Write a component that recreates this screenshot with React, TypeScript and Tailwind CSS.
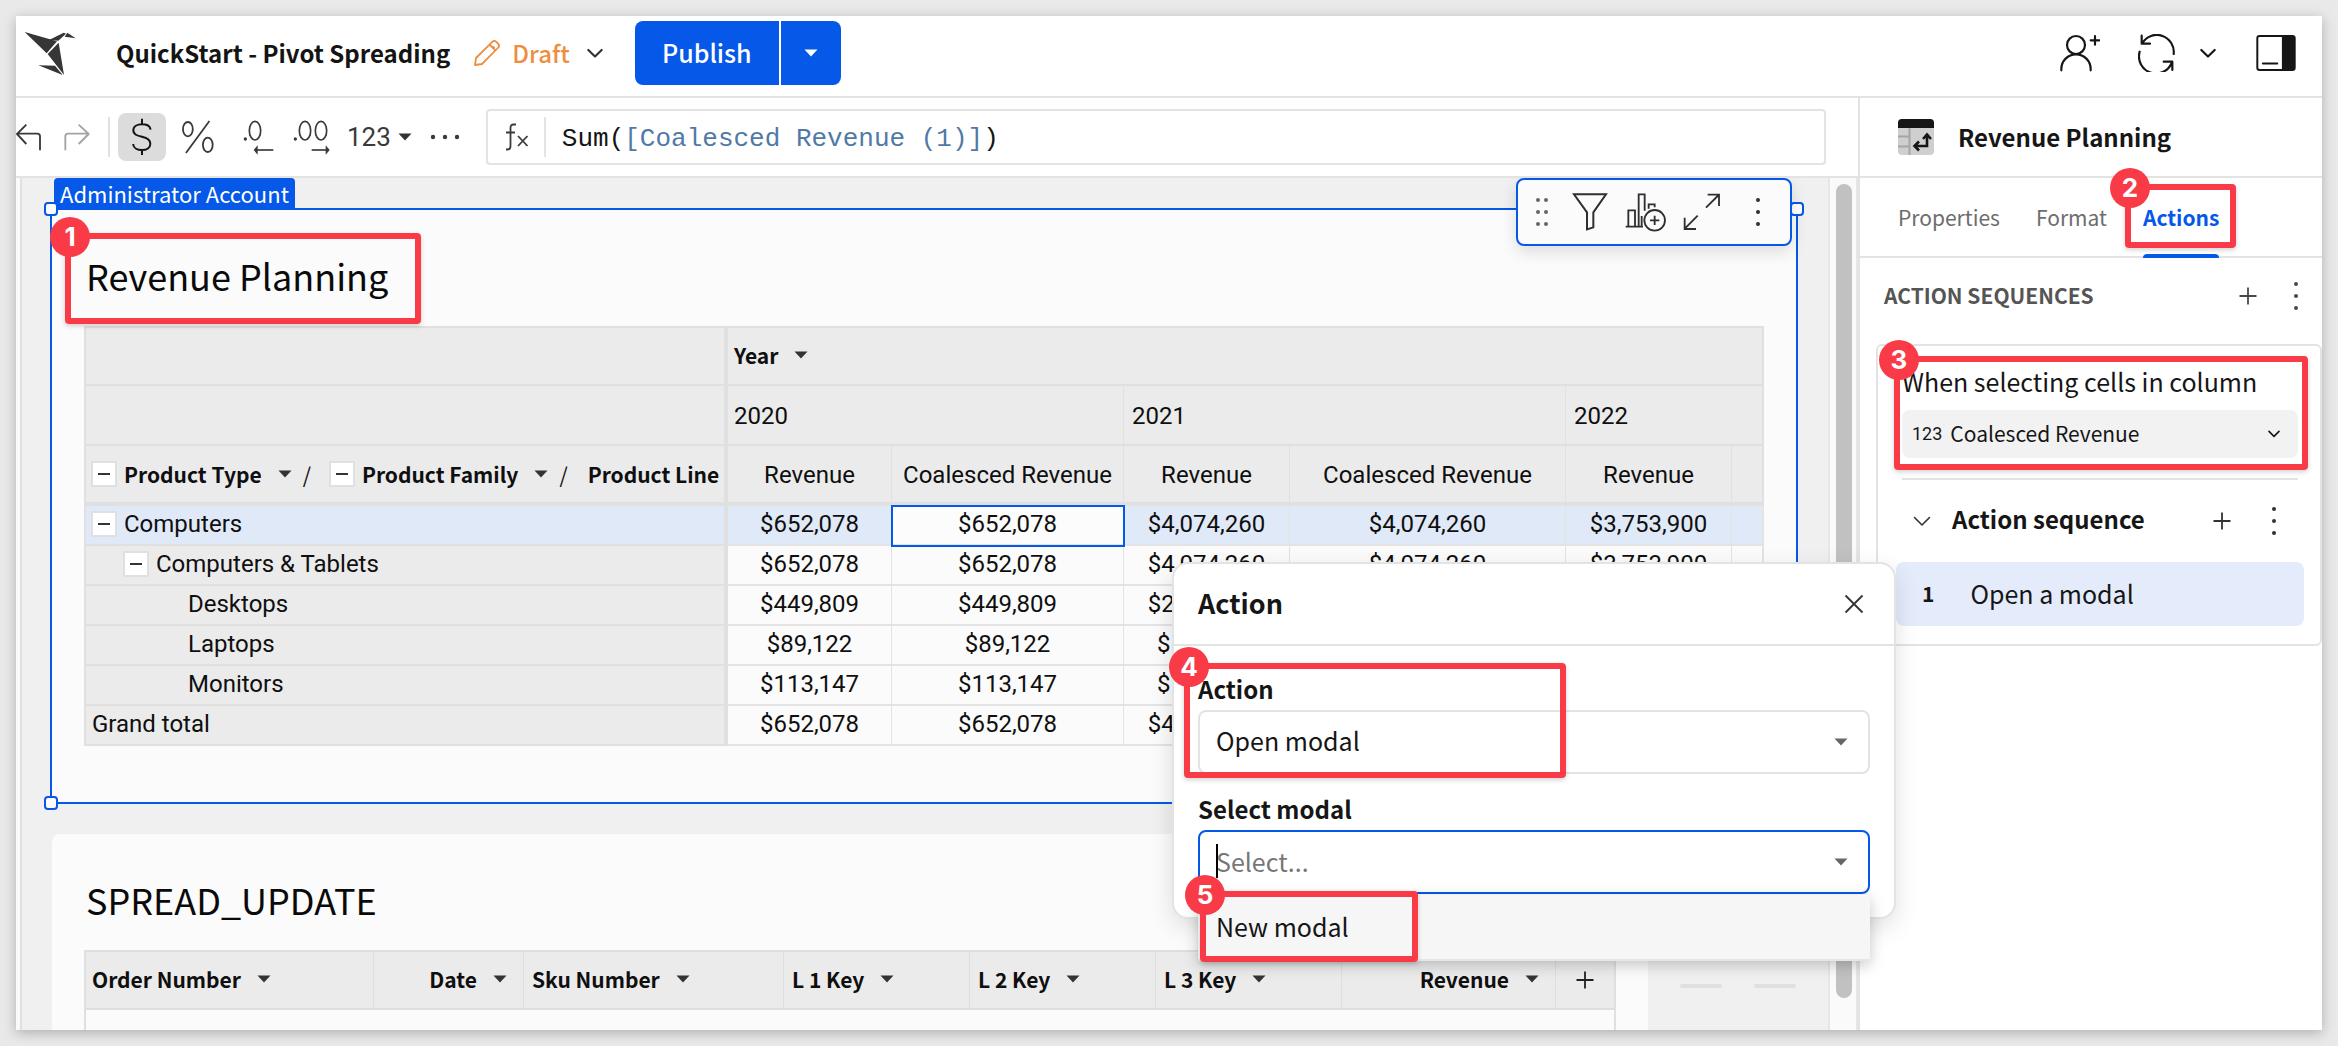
import React from "react";

const CARD_TITLE = "text-[36px] leading-[48px] text-[#0a0a0a]";

function Callout({ n, className }: { n: number; className: string }) {
  return (
    <div
      aria-hidden="true"
      className={`pointer-events-none absolute z-30 rounded-[4px] border-[6px] border-[#f93b48] shadow-[0_2px_5px_rgba(0,0,0,0.18)] ${className}`}
    >
      <span className="absolute -left-[21px] -top-[22px] flex size-10 items-center justify-center rounded-full bg-[#f93b48] font-[Inter,sans-serif] text-[26px] leading-none font-bold text-white">
        {n}
      </span>
    </div>
  );
}

function Caret({ className = "text-[#333]" }: { className?: string }) {
  return (
    <svg width="14" height="8" viewBox="0 0 14 8" className={`shrink-0 ${className}`} aria-hidden="true">
      <path d="M0.5 0.5h13L7 7.5z" fill="currentColor" />
    </svg>
  );
}

function Chevron({ small = false, thin = false }: { small?: boolean; thin?: boolean }) {
  return (
    <svg width={small ? 12 : thin ? 18 : 16} height={small ? 8 : 11} viewBox="0 0 18 11" fill="none" stroke="currentColor" strokeWidth={thin ? 1.6 : 2.4} strokeLinecap="round" strokeLinejoin="round" className="shrink-0" aria-hidden="true">
      <path d="M1.5 1.5L9 9l7.5-7.5" />
    </svg>
  );
}

function Kebab({ className = "" }: { className?: string }) {
  return (
    <svg width="8" height="30" viewBox="0 0 8 30" fill="currentColor" className={`shrink-0 ${className}`} aria-hidden="true">
      <circle cx="4" cy="3" r="2" />
      <circle cx="4" cy="15" r="2" />
      <circle cx="4" cy="27" r="2" />
    </svg>
  );
}

function Plus() {
  return (
    <svg width="18" height="18" viewBox="0 0 18 18" stroke="currentColor" strokeWidth="1.8" className="shrink-0" aria-hidden="true">
      <path d="M9 0.5v17M0.5 9h17" />
    </svg>
  );
}

function Bird() {
  return (
    <svg width="52" height="45" viewBox="44 62 156 135" fill="#363636" className="shrink-0" aria-hidden="true">
      <path d="M46 65L143 93L112 129Z" />
      <path d="M119 89L163 67L170 70L147 91Z" />
      <path d="M174 67L199 84L166 79Z" />
      <path d="M115 131L148 97L164 194Z" />
      <path d="M87 165L137 166L160 194Z" />
    </svg>
  );
}

function Header() {
  return (
    <header className="flex h-[82px] shrink-0 items-center border-b-2 border-[#e3e3e3] pr-[26px] pb-[6px] pl-2">
      <a href="#home" aria-label="Home">
        <Bird />
      </a>
      <h1 className="ml-10 text-[24px] leading-8 font-bold text-[#141414]">QuickStart - Pivot Spreading</h1>
      <button className="ml-6 flex items-center text-[#ee8e3f]">
        <svg width="26" height="26" viewBox="0 0 26 26" fill="none" stroke="currentColor" strokeWidth="1.8" strokeLinejoin="round" aria-hidden="true">
          <path d="M1 25l1-7L18.500 1.700a2.600 2.600 0 0 1 3.600 0l2.200 2.200a2.600 2.600 0 0 1 0 3.600L8 24z" />
          <path d="M15.500 4.500l6 6M19 6.500l1.500 1.500" />
        </svg>
        <span className="ml-3 text-[24px] leading-8 font-medium">Draft</span>
        <span className="ml-[17px] text-[#333]">
          <Chevron />
        </span>
      </button>
      <div className="ml-8 flex h-16 gap-[2px] text-white">
        <button className="w-36 rounded-l-lg bg-[#0558e8] pb-[2px] text-[25px] leading-8 font-medium">Publish</button>
        <button className="flex w-[60px] items-center justify-center rounded-r-lg bg-[#0558e8]" aria-label="Publish options">
          <Caret className="text-white" />
        </button>
      </div>
      <div className="ml-auto flex items-center text-[#161616]">
        <button aria-label="Share">
          <svg width="40" height="38" viewBox="90 42 120 114" fill="none" stroke="currentColor" strokeWidth="6.500" strokeLinecap="round">
            <circle cx="138" cy="75" r="27" />
            <path d="M94 151v-4a44 44 0 0 1 88 0v4M182 61h26M195 48v26" />
          </svg>
        </button>
        <button className="ml-[38px]" aria-label="Refresh">
          <svg width="38" height="38" viewBox="324 42 112 114" fill="none" stroke="currentColor" strokeWidth="6.500" strokeLinecap="round" strokeLinejoin="round">
            <path d="M334 47v24h25M336 69A51 51 0 0 1 430 102" />
            <path d="M328 95A51 51 0 0 0 424 129M400 125h26v25" />
          </svg>
        </button>
        <button className="ml-6" aria-label="Refresh options">
          <Chevron />
        </button>
        <button className="ml-10" aria-label="Toggle panel">
          <svg width="40" height="38" viewBox="677 42 122 114" fill="none" stroke="currentColor" strokeWidth="6">
            <rect x="681" y="47" width="114" height="104" rx="7" />
            <path d="M756 47h33a7 7 0 0 1 7 7v90a7 7 0 0 1-7 7h-33z" fill="currentColor" stroke="none" />
            <path d="M698 131h44" strokeLinecap="round" />
          </svg>
        </button>
      </div>
    </header>
  );
}

function FormulaBar() {
  return (
    <div className="flex h-20 shrink-0 items-center border-b-2 border-[#e3e3e3] pr-8 text-[#3a3a3a]">
      <button aria-label="Undo">
        <svg width="26" height="28" viewBox="16 341 78 84" fill="none" stroke="currentColor" strokeWidth="5.500" strokeLinejoin="round">
          <path d="M47 346L19 374L47 404M19 373H80a8 8 0 0 1 8 8V423" />
        </svg>
      </button>
      <button className="ml-[22px] text-[#a3a3a3]" aria-label="Redo">
        <svg width="26" height="28" viewBox="161 341 78 84" fill="none" stroke="currentColor" strokeWidth="5.500" strokeLinejoin="round">
          <path d="M205 346L235 374L205 404M235 373H173a8 8 0 0 0-8 8V423" />
        </svg>
      </button>
      <span className="ml-[18px] h-10 w-[2px] bg-[#e0e0e0]" />
      <button className="ml-2 flex size-12 items-center justify-center rounded-lg bg-[#dcdcdc] text-[#141414]" aria-label="Currency format">
        <svg width="20" height="38" viewBox="367 324 60 114" fill="none" stroke="currentColor" strokeWidth="6" strokeLinecap="square">
          <path d="M422 356c-2-9-13-13-25-13-14 0-26 6-26 18 0 13 12 16 26 19s25 7 25 21c0 12-11 19-25 19s-25-6-26-15M397 329v14M397 420v12" />
        </svg>
      </button>
      <button className="ml-4" aria-label="Percent format">
        <svg width="32" height="34" viewBox="516 330 98 102" fill="none" stroke="currentColor" strokeWidth="5.500">
          <ellipse cx="534" cy="357" rx="15" ry="22" />
          <ellipse cx="595" cy="405" rx="15" ry="22" />
          <path d="M600 332L528 430" />
        </svg>
      </button>
      <button className="ml-[29px]" aria-label="Fewer decimals">
        <svg width="32" height="35" viewBox="70 91 96 105" fill="none" stroke="currentColor" strokeWidth="5">
          <circle cx="77" cy="148" r="5" fill="currentColor" stroke="none" />
          <ellipse cx="106" cy="123" rx="17" ry="28" />
          <path d="M161 181H108" />
          <path d="M102 181l12-14v28z" fill="currentColor" stroke="none" />
        </svg>
      </button>
      <button className="ml-[18px]" aria-label="More decimals">
        <svg width="37" height="35" viewBox="220 91 111 105" fill="none" stroke="currentColor" strokeWidth="5">
          <circle cx="227" cy="148" r="5" fill="currentColor" stroke="none" />
          <ellipse cx="256" cy="123" rx="17" ry="28" />
          <ellipse cx="304" cy="123" rx="17" ry="28" />
          <path d="M276 181H322" />
          <path d="M330 181l-12-14v28z" fill="currentColor" stroke="none" />
        </svg>
      </button>
      <button className="ml-[17px] flex items-center gap-[7px] font-[Roboto,sans-serif] text-[26px] leading-8">
        123
        <Caret />
      </button>
      <button className="ml-[18px]" aria-label="More formats">
        <svg width="30" height="8" viewBox="0 0 30 8" fill="currentColor">
          <circle cx="3" cy="4" r="2.200" />
          <circle cx="15" cy="4" r="2.200" />
          <circle cx="27" cy="4" r="2.200" />
        </svg>
      </button>
      <div className="ml-[26px] flex h-14 flex-1 items-center rounded-[4px] border-2 border-[#e3e3e3] pl-4">
        <svg width="26" height="30" viewBox="0 0 26 30" fill="none" stroke="currentColor" strokeWidth="1.800" aria-hidden="true">
          <path d="M2 27.500h1.500q3 0 3-3.500V6q0-3.500 3-3.500h2.500M2 10.500h9" />
          <path d="M14 14l9.500 10M23.500 14L14 24" />
        </svg>
        <span className="ml-[14px] h-10 w-[2px] bg-[#e3e3e3]" />
        <div role="textbox" aria-label="Formula" className="ml-4 pt-1 font-['Liberation_Mono',monospace] text-[26px] leading-8 text-[#141414]">
          Sum(<span className="text-[#5079a6]">[Coalesced Revenue (1)]</span>)
        </div>
      </div>
    </div>
  );
}

function Collapse({ label }: { label: string }) {
  return (
    <button aria-label={label} className="flex size-[26px] shrink-0 items-center justify-center border-2 border-[#e0e0e0] bg-white">
      <span className="h-[2px] w-3 bg-[#333]" />
    </button>
  );
}

const HEAD = "border-[#e0e0e0] bg-[#ebebeb] px-0 pt-[2px] pb-0 text-left align-middle";
const ROWS: { label: string; indent: string; collapse: boolean; selected?: boolean; values: string[] }[] = [
  { label: "Computers", indent: "pl-[5px]", collapse: true, selected: true, values: ["$652,078", "$652,078", "$4,074,260", "$4,074,260", "$3,753,900"] },
  { label: "Computers & Tablets", indent: "pl-[37px]", collapse: true, values: ["$652,078", "$652,078", "$4,074,260", "$4,074,260", "$3,753,900"] },
  { label: "Desktops", indent: "pl-[102px]", collapse: false, values: ["$449,809", "$449,809", "$2,811,304", "", ""] },
  { label: "Laptops", indent: "pl-[102px]", collapse: false, values: ["$89,122", "$89,122", "$556,214", "", ""] },
  { label: "Monitors", indent: "pl-[102px]", collapse: false, values: ["$113,147", "$113,147", "$706,742", "", ""] },
  { label: "Grand total", indent: "pl-[6px]", collapse: false, values: ["$652,078", "$652,078", "$4,074,260", "", ""] },
];

function PivotTable() {
  return (
    <table className="w-full table-fixed border-separate border-spacing-0 font-[Roboto,sans-serif] text-2xl leading-7 text-[#0f0f0f]">
      <colgroup>
        <col className="w-[644px]" />
        <col className="w-[164px]" />
        <col className="w-[232px]" />
        <col className="w-[166px]" />
        <col className="w-[276px]" />
        <col className="w-[166px]" />
        <col />
      </colgroup>
      <thead>
        <tr className="h-[60px]">
          <td className={`${HEAD} border-t-2 border-r-4 border-b-2 border-l-2`} />
          <th colSpan={6} className={`${HEAD} border-t-2 border-r-2 border-b-2`}>
            <button className="flex items-center gap-4 pb-1 pl-[6px] font-['Noto_Sans_CJK_SC',sans-serif] text-[21px] font-bold">
              Year <Caret />
            </button>
          </th>
        </tr>
        <tr className="h-[60px]">
          <td className={`${HEAD} border-r-4 border-b-2 border-l-2`} />
          <th colSpan={2} className={`${HEAD} border-r border-b-2 pl-[6px] font-normal`}>2020</th>
          <th colSpan={2} className={`${HEAD} border-r border-b-2 pl-2 font-normal`}>2021</th>
          <th colSpan={2} className={`${HEAD} border-r-2 border-b-2 pl-2 font-normal`}>2022</th>
        </tr>
        <tr className="h-[60px]">
          <th className={`${HEAD} border-r-4 border-b-4 border-l-2`}>
            <div className="flex items-center pb-[2px] pl-[5px] font-['Noto_Sans_CJK_SC',sans-serif] text-[21px] font-bold whitespace-nowrap">
              <Collapse label="Collapse Product Type" />
              <button className="ml-[7px] flex items-center gap-4">Product Type <Caret /></button>
              <span className="ml-[11px] font-normal">/</span>
              <span className="ml-[18px]">
                <Collapse label="Collapse Product Family" />
              </span>
              <button className="ml-[7px] flex items-center gap-4">Product Family <Caret /></button>
              <span className="ml-[11px] font-normal">/</span>
              <span className="ml-5">Product Line</span>
            </div>
          </th>
          {["Revenue", "Coalesced Revenue", "Revenue", "Coalesced Revenue", "Revenue"].map((name, i) => (
            <th key={i} className="border-r border-b-4 border-[#e0e0e0] bg-[#ebebeb] px-0 pt-[2px] pb-0 text-center align-middle font-normal whitespace-nowrap">
              {name}
            </th>
          ))}
          <td className={`${HEAD} border-r-2 border-b-4`} />
        </tr>
      </thead>
      <tbody>
        {ROWS.map((row) => (
          <tr key={row.label} className="h-10">
            <th className={`border-r-4 border-b-2 border-l-2 border-[#e0e0e0] px-0 pt-0 pb-[2px] text-left align-middle font-normal ${row.selected ? "bg-[#e0e9f8]" : "bg-[#ebebeb]"}`}>
              <div className={`flex items-center gap-[7px] ${row.indent}`}>
                {row.collapse && <Collapse label={`Collapse ${row.label}`} />}
                {row.label}
              </div>
            </th>
            {row.values.map((v, i) => (
              <td
                key={i}
                className={`border-r border-b-2 border-[#e3e3e3] px-0 pt-0 pb-[2px] text-center align-middle ${
                  row.selected ? (i === 1 ? "relative bg-[#fcfcfc] outline-2 -outline-offset-1 outline-[#0558e8]" : "bg-[#e0e9f8]") : ""
                }`}
              >
                {v}
              </td>
            ))}
            <td className={`border-r-2 border-b-2 border-[#e3e3e3] p-0 ${row.selected ? "bg-[#e0e9f8]" : ""}`} />
          </tr>
        ))}
      </tbody>
    </table>
  );
}

function UpdateTable() {
  const cols = [
    { name: "Order Number" },
    { name: "Date", right: true },
    { name: "Sku Number" },
    { name: "L 1 Key" },
    { name: "L 2 Key" },
    { name: "L 3 Key" },
    { name: "Revenue", right: true },
  ];
  return (
    <table className="w-full table-fixed border-separate border-spacing-0 border-r-2 border-l-2 border-[#e0e0e0] text-[21px] leading-7 text-[#0f0f0f]">
      <colgroup>
        <col className="w-[288px]" />
        <col className="w-[150px]" />
        <col className="w-[260px]" />
        <col className="w-[186px]" />
        <col className="w-[186px]" />
        <col className="w-[186px]" />
        <col />
        <col className="w-[58px]" />
      </colgroup>
      <thead>
        <tr className="h-[60px]">
          {cols.map((c, i) => (
            <th key={c.name} className="border-t-2 border-r border-b-2 border-[#dedede] bg-[#ebebeb] p-0 align-middle font-bold">
              <button className={`flex w-full items-center gap-4 pb-[2px] ${i === 0 ? "pl-[6px]" : "pl-2"} ${c.right ? "justify-end pr-4" : ""}`}>
                {c.name} <Caret />
              </button>
            </th>
          ))}
          <th className="border-t-2 border-b-2 border-[#dedede] bg-[#ebebeb] p-0 align-middle">
            <button aria-label="Add column" className="flex w-full justify-center text-[#222]">
              <Plus />
            </button>
          </th>
        </tr>
      </thead>
      <tbody>
        <tr className="h-14">
          <td colSpan={8} />
        </tr>
      </tbody>
    </table>
  );
}

function ElementToolbar() {
  return (
    <div className="absolute -top-8 right-[4px] z-10 flex h-[68px] w-[276px] items-center rounded-lg border-2 border-[#0558e8] bg-[#fbfbfb] pl-[17px] text-[#2f2f2f] shadow-[0_6px_16px_rgba(0,0,0,0.12)]">
      <button aria-label="Move" className="text-[#666]">
        <svg width="14" height="30" viewBox="0 0 14 30" fill="currentColor">
          <circle cx="3" cy="3" r="2" />
          <circle cx="11" cy="3" r="2" />
          <circle cx="3" cy="15" r="2" />
          <circle cx="11" cy="15" r="2" />
          <circle cx="3" cy="27" r="2" />
          <circle cx="11" cy="27" r="2" />
        </svg>
      </button>
      <button aria-label="Filter" className="ml-[23px]">
        <svg width="36" height="40" viewBox="276 158 108 120" fill="none" stroke="currentColor" strokeWidth="6">
          <path d="M282 165H378L340 219V264L321 270V219Z" />
        </svg>
      </button>
      <button aria-label="Create child chart" className="ml-[17px]">
        <svg width="42" height="40" viewBox="436 158 126 120" fill="none" stroke="currentColor" strokeWidth="5.500">
          <path d="M438 262H490M446 262V213H466V262M477 262V165H495V214M486 262V230M507 208V195H525V204" />
          <circle cx="525" cy="243" r="31" />
          <path d="M525 229v28M511 243h28" />
        </svg>
      </button>
      <button aria-label="Maximize" className="ml-4">
        <svg width="38" height="38" viewBox="610 160 114 114" fill="none" stroke="currentColor" strokeWidth="5.500">
          <path d="M679 204L717 166M684 165H718V199M654 228L616 266M615 234V268H649" />
        </svg>
      </button>
      <button aria-label="More" className="ml-[33px]">
        <Kebab />
      </button>
    </div>
  );
}

function Canvas() {
  return (
    <div className="flex min-w-0 flex-1 flex-col overflow-hidden border-l-2 border-[#e0e0e0] bg-[#f0f0f0]">
      <div className="ml-8 h-[30px] shrink-0 self-start rounded-t-[4px] bg-[#0558e8] px-[6px] text-[22px] leading-[30px] text-white">Administrator Account</div>
      <section className="relative mr-[30px] ml-7 border-2 border-[#0558e8] bg-[#fbfbfb] px-8 pt-[41px] pb-14">
        <span className="absolute -top-2 -left-2 size-[14px] rounded-[4px] border-2 border-[#0558e8] bg-white" />
        <span className="absolute -top-2 -right-2 size-[14px] rounded-[4px] border-2 border-[#0558e8] bg-white" />
        <span className="absolute -bottom-2 -left-2 size-[14px] rounded-[4px] border-2 border-[#0558e8] bg-white" />
        <ElementToolbar />
        <div className="relative mb-[27px] w-fit pl-[2px]">
          <h2 className={CARD_TITLE}>Revenue Planning</h2>
          <Callout n={1} className="-top-[18px] -right-[33px] -bottom-[25px] -left-[19px]" />
        </div>
        <PivotTable />
      </section>
      <div className="mt-[30px] mr-8 ml-[30px] flex gap-8">
        <section className="h-[300px] min-w-0 flex-1 rounded-t-lg bg-[#fbfbfb] px-8 pt-[41px]">
          <h2 className={`${CARD_TITLE} mb-[27px] pl-[2px]`}>SPREAD_UPDATE</h2>
          <UpdateTable />
        </section>
        <div className="flex gap-8 pt-[150px]">
          <span className="h-1 w-[42px] rounded bg-[#e0e0e0]" />
          <span className="h-1 w-[42px] rounded bg-[#e0e0e0]" />
        </div>
      </div>
    </div>
  );
}

function SidePanel() {
  return (
    <aside className="w-[464px] shrink-0 border-l-2 border-[#e3e3e3] bg-white text-[#161616]">
      <div className="flex h-20 items-center gap-6 border-b-2 border-[#e3e3e3] pl-[38px]">
        <svg width="36" height="36" viewBox="0 0 36 36" fill="none" aria-hidden="true">
          <rect width="36" height="36" rx="4" fill="#cfcfcf" />
          <path d="M0 9V4a4 4 0 0 1 4-4h28a4 4 0 0 1 4 4v5z" fill="#161616" />
          <path d="M0 17.500h11M0 27.500h11M11.500 9v27" stroke="#a6a6a6" strokeWidth="2" />
          <path d="M17 27h12V17M21 22.500L16.500 27l4.500 4.500M25 20l4-4.500 4 4.500" stroke="#161616" strokeWidth="2.600" />
        </svg>
        <h2 className="text-[24px] leading-8 font-bold">Revenue Planning</h2>
      </div>
      <nav className="flex h-20 gap-9 border-b-2 border-[#e3e3e3] pl-[38px] text-[21px] leading-7 text-[#6d6d6d]">
        <button>Properties</button>
        <button>Format</button>
        <button className="relative font-bold text-[#0558e8]">
          Actions
          <span className="absolute -bottom-[2px] left-0 h-1 w-full rounded-t bg-[#0558e8]" />
          <Callout n={2} className="top-[6px] -right-[17px] bottom-[8px] -left-[18px]" />
        </button>
      </nav>
      <div className="flex h-[76px] items-center pr-[22px] pl-6 text-[#474747]">
        <h3 className="pb-[2px] text-[21px] leading-7 font-bold text-[#555]">ACTION SEQUENCES</h3>
        <button className="ml-auto" aria-label="Add action sequence">
          <Plus />
        </button>
        <button className="ml-[35px]" aria-label="More options">
          <Kebab />
        </button>
      </div>
      <div className="mt-[10px] ml-4 rounded-md border-2 border-[#e3e3e3] pt-[19px] pr-[22px] pb-[18px] pl-6">
        <div className="relative">
          <label htmlFor="trigger-column" className="block text-[25px] leading-8">
            When selecting cells in column
          </label>
          <div className="relative mt-[13px] flex h-12 items-center rounded-lg bg-[#f2f2f2] pr-[18px] pl-[10px]">
            <span className="font-[Roboto,sans-serif] text-[18px] leading-6">123</span>
            <select id="trigger-column" className="ml-2 h-full flex-1 appearance-none bg-transparent px-0 text-[21px] outline-none">
              <option>Coalesced Revenue</option>
            </select>
            <Chevron small />
          </div>
          <Callout n={3} className="-top-[9px] -right-[10px] -bottom-[12px] -left-[8px]" />
        </div>
        <hr className="mt-5 border-t-2 border-[#e3e3e3]" />
        <div className="flex h-[82px] items-center pr-5 pl-[11px] text-[#333]">
          <button aria-label="Collapse sequence">
            <Chevron thin />
          </button>
          <h4 className="ml-[21px] pb-[5px] text-[24px] leading-8 font-bold text-[#161616]">Action sequence</h4>
          <button className="ml-auto" aria-label="Add action">
            <Plus />
          </button>
          <button className="ml-[39px]" aria-label="Sequence options">
            <Kebab />
          </button>
        </div>
        <button className="-mx-[6px] flex h-16 w-[408px] items-center rounded-lg bg-[#e4ebfa] pb-[3px] pl-[26px] text-left leading-8">
          <span className="text-[21px] font-bold">1</span>
          <span className="ml-9 text-[25px]">Open a modal</span>
        </button>
      </div>
    </aside>
  );
}

function ActionModal() {
  return (
    <div role="dialog" aria-labelledby="modal-title" className="absolute top-[464px] right-[426px] z-20 w-[724px] rounded-2xl border-2 border-[#e3e3e3] bg-white text-[#161616] shadow-[0_8px_24px_rgba(0,0,0,0.12)]">
      <div className="flex h-[82px] items-center justify-between border-b-2 border-[#e3e3e3] pr-[30px] pl-6">
        <h2 id="modal-title" className="pb-[2px] text-[27px] leading-9 font-bold">Action</h2>
        <button aria-label="Close">
          <svg width="20" height="20" viewBox="0 0 20 20" stroke="#333" strokeWidth="1.800">
            <path d="M1.500 1.500l17 17M18.500 1.500l-17 17" />
          </svg>
        </button>
      </div>
      <div className="px-6 pt-[27px] pb-[23px]">
        <div className="relative">
          <label htmlFor="action-type" className="block text-[24px] leading-8 font-bold">Action</label>
          <div className="relative mt-[5px]">
            <select id="action-type" className="block h-16 w-full appearance-none rounded-lg border-2 border-[#e3e3e3] bg-white px-4 pb-[2px] text-[25px] outline-none">
              <option>Open modal</option>
            </select>
            <span className="pointer-events-none absolute inset-y-0 right-[22px] flex items-center">
              <Caret className="text-[#666]" />
            </span>
          </div>
          <Callout n={4} className="-top-[10px] -bottom-[4px] -left-[14px] w-[382px]" />
        </div>
        <label htmlFor="select-modal" className="mt-[19px] block text-[24px] leading-8 font-bold">Select modal</label>
        <div className="relative mt-[5px]">
          <input id="select-modal" type="text" placeholder="Select..." className="block h-16 w-full rounded-lg border-2 border-[#0558e8] bg-white px-4 pb-[2px] text-[25px] placeholder-[#777] outline-none" />
          <span className="absolute top-[14px] left-[18px] h-[34px] w-[2px] bg-black" />
          <span className="pointer-events-none absolute inset-y-0 right-[22px] flex items-center">
            <Caret className="text-[#666]" />
          </span>
          <div className="absolute top-[65px] left-0 h-[66px] w-full border-b-2 border-[#e6e6e6] bg-[#f6f6f6] shadow-[0_4px_14px_rgba(0,0,0,0.22)]">
            <button className="h-full w-full px-[18px] pb-[2px] text-left text-[25px] leading-8">New modal</button>
            <Callout n={5} className="-top-[4px] -bottom-[3px] left-[2px] w-[218px]" />
          </div>
        </div>
      </div>
    </div>
  );
}

export default function App() {
  return (
    <div className="flex h-screen flex-col overflow-hidden bg-[#e9e9e9] p-4 font-['Noto_Sans_CJK_SC',sans-serif]">
      <div className="flex min-h-0 flex-1 flex-col overflow-hidden bg-white shadow-[0_3px_12px_rgba(0,0,0,0.25)]">
        <Header />
        <main className="relative flex min-h-0 flex-1">
          <div className="flex min-w-0 flex-1 flex-col">
            <FormulaBar />
            <div className="flex min-h-0 flex-1 bg-[#fafafa] pl-1">
              <Canvas />
              <div className="w-[30px] shrink-0 border-r-2 border-l-2 border-[#e6e6e6] bg-[#fafafa] px-[6px] pt-[6px] pb-8">
                <div className="h-full w-4 rounded-full bg-[#c1c1c1]" />
              </div>
            </div>
          </div>
          <SidePanel />
          <ActionModal />
        </main>
      </div>
    </div>
  );
}
